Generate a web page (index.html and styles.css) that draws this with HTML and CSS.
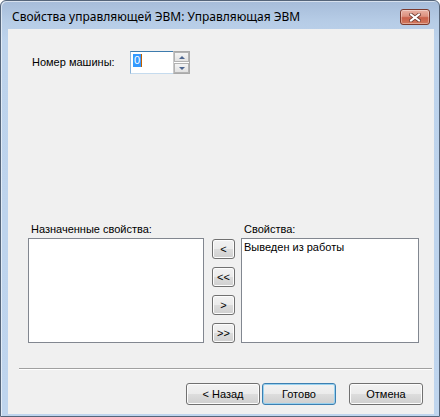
FILE: index.html
```html
<!DOCTYPE html>
<html lang="ru">
<head>
<meta charset="utf-8">
<link rel="stylesheet" href="styles.css">
</head>
<body>
<div class="window">
  <div class="titlebar">
    <span class="title">Свойства управляющей ЭВМ: Управляющая ЭВМ</span>
    <button class="close" aria-label="Закрыть">
      <svg width="12" height="9" viewBox="0 0 12 9">
        <path d="M2 1.5 L10 7.5 M10 1.5 L2 7.5" stroke="#6e3a30" stroke-width="3.6" stroke-linecap="square"/>
        <path d="M2 1.5 L10 7.5 M10 1.5 L2 7.5" stroke="#ffffff" stroke-width="2" stroke-linecap="square"/>
      </svg>
    </button>
  </div>
  <div class="frame">
    <div class="client">
      <div class="num-row">
        <span class="num-label">Номер машины:</span>
        <div class="spin">
          <div class="spin-field"><span class="sel">0</span></div>
          <div class="spin-btns">
            <div class="spin-btn"><span class="arr-up"></span></div>
            <div class="spin-btn"><span class="arr-down"></span></div>
          </div>
        </div>
      </div>

      <div class="lists">
        <div class="list-col left">
          <div class="list-label">Назначенные свойства:</div>
          <div class="listbox"></div>
        </div>
        <div class="move-btns">
          <button class="btn small">&lt;</button>
          <button class="btn small">&lt;&lt;</button>
          <button class="btn small">&gt;</button>
          <button class="btn small">&gt;&gt;</button>
        </div>
        <div class="list-col right">
          <div class="list-label">Свойства:</div>
          <div class="listbox">
            <div class="item">Выведен из работы</div>
          </div>
        </div>
      </div>

      <div class="separator"></div>

      <div class="footer">
        <button class="btn wide">&lt; Назад</button>
        <button class="btn wide default">Готово</button>
        <button class="btn wide cancel">Отмена</button>
      </div>
    </div>
  </div>
</div>
</body>
</html>
```

FILE: styles.css
```css
html, body {
  margin: 0;
  padding: 0;
  background: #ffffff;
}

.window {
  width: 440px;
  height: 417px;
  box-sizing: border-box;
  border: 1px solid #55657a;
  border-radius: 6px 6px 0 0;
  background: linear-gradient(#a6bcd9 0px, #b6cce6 20px, #bdd3ec 40px, #bfd5ee 100%);
  display: flex;
  flex-direction: column;
  font-family: "Liberation Sans", Arial, sans-serif;
  font-size: 11px;
  color: #000;
  box-shadow: inset 1px 1px 0 rgba(255,255,255,0.55);
}

.titlebar {
  height: 28px;
  display: flex;
  justify-content: space-between;
  align-items: flex-start;
  padding: 0 9px 0 11px;
  flex: none;
}

.title {
  font-family: "Noto Sans", "Open Sans", sans-serif;
  font-size: 12px;
  line-height: 16px;
  margin-top: 8px;
  color: #000;
}

.close {
  margin-top: 8px;
  width: 30px;
  height: 16px;
  padding: 0;
  border: 1px solid #7c3a2d;
  border-radius: 3px;
  background: linear-gradient(#e9b2a4 0%, #dc917f 45%, #c9604a 55%, #d27a5f 100%);
  box-shadow: inset 0 0 0 1px rgba(255,255,255,0.35);
  display: flex;
  align-items: center;
  justify-content: center;
}

.frame {
  flex: 1;
  padding: 0 5px 2px 7px;
  display: flex;
}

.client {
  flex: 1;
  background: #f0f0f0;
  display: flex;
  flex-direction: column;
}

.num-row {
  display: flex;
  align-items: center;
  margin: 22px 0 0 24px;
  height: 23px;
}

.num-label {
  width: 98px;
  line-height: 13px;
}

.spin {
  display: flex;
  height: 23px;
  width: 60px;
  box-sizing: border-box;
}

.spin-field {
  width: 43px;
  box-sizing: border-box;
  background: #fff;
  border-top: 1px solid #3d7bad;
  border-left: 1px solid #8cb4d8;
  border-bottom: 1px solid #c5dbee;
  padding: 2px 0 0 2px;
}

.sel {
  display: inline-block;
  background: #3399ff;
  color: #fff;
  line-height: 13px;
  padding: 0 1px;
  border-right: 1px solid #c06000;
}

.spin-btns {
  width: 17px;
  box-sizing: border-box;
  border: 1px solid #a9a9a9;
  border-left: 1px solid #c9c9c9;
  background: #fff;
  display: flex;
  flex-direction: column;
  gap: 1px;
  padding: 0 0 0 0;
}

.spin-btn {
  flex: 1;
  border: 1px solid #b3b3b3;
  background: linear-gradient(#f4f4f4, #e2e2e2);
  display: flex;
  align-items: center;
  justify-content: center;
}

.arr-up, .arr-down {
  width: 0;
  height: 0;
  border-left: 3px solid transparent;
  border-right: 3px solid transparent;
}
.arr-up { border-bottom: 3px solid #4e6690; }
.arr-down { border-top: 3px solid #4e6690; }

.lists {
  display: flex;
  margin: 149px 0 0 20px;
  align-items: flex-start;
}

.list-col {
  display: flex;
  flex-direction: column;
}

.list-col.left { width: 176px; }
.list-col.right { width: 178px; }

.list-label {
  line-height: 13px;
  padding-left: 3px;
  margin-bottom: 2px;
}

.listbox {
  height: 105px;
  box-sizing: border-box;
  border: 1px solid #828790;
  background: #fff;
  padding: 2px 2px;
}

.item {
  line-height: 13px;
}

.move-btns {
  display: flex;
  flex-direction: column;
  gap: 8px;
  margin: 16px 6px 0 8px;
}

.btn {
  font-family: "Liberation Sans", Arial, sans-serif;
  font-size: 11px;
  color: #000;
  border: 1px solid #707070;
  border-radius: 3px;
  background: linear-gradient(#f2f2f2 0%, #ebebeb 50%, #dddddd 50%, #cfcfcf 100%);
  box-shadow: inset 0 0 0 1px #fcfcfc;
  padding: 0;
  box-sizing: border-box;
}

.btn.small {
  width: 23px;
  height: 20px;
}

.separator {
  margin: 25px 2px 0 11px;
  border-top: 1px solid #a0a0a0;
  border-bottom: 1px solid #ffffff;
}

.footer {
  display: flex;
  justify-content: flex-end;
  margin: 13px 11px 0 0;
  gap: 2px;
}

.btn.wide {
  width: 74px;
  height: 22px;
}

.btn.default {
  border-color: #3c7fb1;
  box-shadow: inset 0 0 0 1px #98d1ef;
}

.btn.cancel {
  margin-left: 11px;
}
```
